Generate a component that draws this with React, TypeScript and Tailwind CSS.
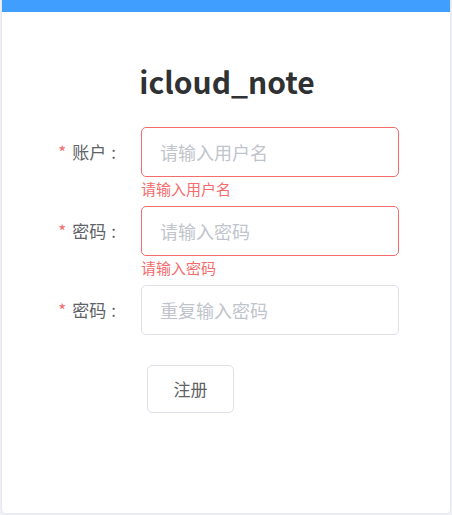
import React from "react";

const font = { fontFamily: '"Noto Sans CJK SC", "Noto Sans", sans-serif' };

function FormRow({
  label,
  placeholder,
  error,
}: {
  label: string;
  placeholder: string;
  error?: string;
}) {
  return (
    <div className="flex">
      <label className="w-[101px] h-[50px] flex items-center justify-end pr-[25px] text-[17px] text-[#606266]">
        <span className="text-[#f56c6c] mr-[6px]">*</span>
        {label}
        <span className="ml-[5px]">:</span>
      </label>
      <div className="flex flex-col">
        <input
          type="text"
          placeholder={placeholder}
          className={
            "w-[258px] h-[50px] rounded-[5px] border px-[18px] text-[18px] text-[#606266] outline-none placeholder:text-[#c0c4cc] " +
            (error ? "border-[#f56c6c]" : "border-[#dcdfe6]")
          }
        />
        <div className="h-[29px] pt-[4px] text-[15px] leading-[16px] text-[#f56c6c]">
          {error}
        </div>
      </div>
    </div>
  );
}

export default function App() {
  return (
    <div className="h-[515px] bg-[#eef0f5] px-[1px]" style={font}>
      <div className="h-[514px] bg-white rounded-b-[5px] border border-t-0 border-[#e4e7ed] overflow-hidden flex flex-col">
        <div className="h-[12px] bg-[#409eff] shrink-0" />
        <h1 className="mt-[49px] h-[40px] leading-[40px] text-center text-[30px] font-bold text-[#303133] pl-[2px]">
          icloud_note
        </h1>
        <div className="mt-[26px] pl-[38px] flex flex-col">
          <FormRow label="账户" placeholder="请输入用户名" error="请输入用户名" />
          <FormRow label="密码" placeholder="请输入密码" error="请输入密码" />
          <FormRow label="密码" placeholder="重复输入密码" />
          <div className="pl-[107px] mt-[1px]">
            <button className="w-[87px] h-[48px] rounded-[5px] border border-[#dcdfe6] bg-white text-[17px] text-[#606266]">
              注册
            </button>
          </div>
        </div>
      </div>
    </div>
  );
}
